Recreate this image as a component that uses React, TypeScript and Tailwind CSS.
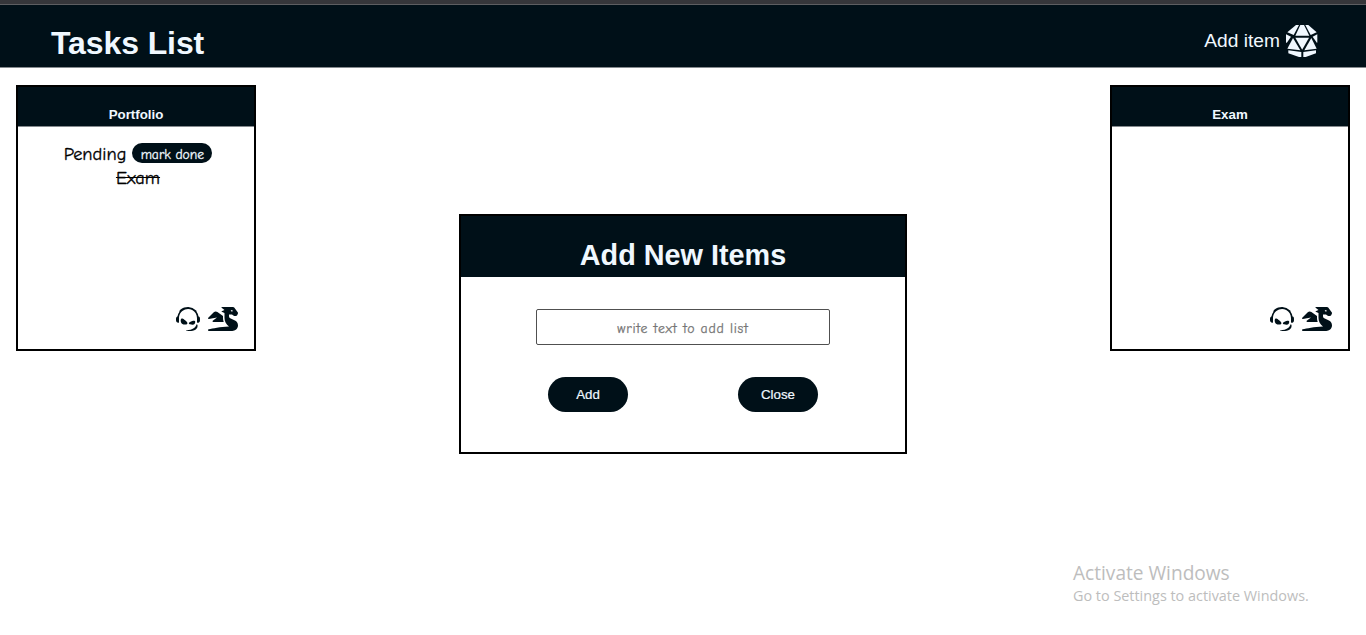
import { FaDragon, FaTeamspeak } from 'react-icons/fa';

type Item = { text: string; done: boolean };

function DiceIcon() {
  return (
    <svg viewBox="18 15 96 96" className="h-8 w-8" fill="currentColor" aria-hidden="true">
      <path d="M61 15h11l16 32H46z" />
      <path d="M48 15h9L41 45 22 37z" />
      <path d="M85 15h-9l16 30 18-8z" />
      <path d="M18 43l15 7-13 19-2-2z" />
      <path d="M112 43l-14 7 13 19 1-2z" />
      <path d="M46 53h41L66.500 89z" />
      <path d="M39 54l22 37-39-5z" />
      <path d="M94 54L73 91l37-5z" />
      <path d="M25 91l39 5v15h-7l-32-11z" />
      <path d="M108 91l-38 5v15h7l31-11z" />
    </svg>
  );
}

function TaskCard({ title, items }: { title: string; items: Item[] }) {
  return (
    <section className="flex h-[266px] w-[240px] flex-col border-2 border-black bg-white">
      <h2 className="h-[40px] border-b border-[#858a8e] bg-[#001018] pt-[20px] text-center font-['Liberation_Sans',sans-serif] text-[13.3px] leading-[16px] font-bold text-[#f0f8ff]">
        {title}
      </h2>
      <ul className="flex-1 pt-[15px] pl-1 text-center font-['Comic_Neue',cursive] text-[18.400px] leading-6 text-black [-webkit-text-stroke:0.3px]">
        {items.map((item) =>
          item.done ? (
            <li key={item.text} className="line-through">{item.text}</li>
          ) : (
            <li key={item.text} className="flex h-6 items-start justify-center gap-[6px]">
              <span>{item.text}</span>
              <button className="mt-px h-5 w-20 rounded-full bg-[#001018] pt-[3px] text-[13.6px] leading-[17px] whitespace-nowrap text-[#f0f8ff]">
                mark done
              </button>
            </li>
          ),
        )}
      </ul>
      <div className="flex items-center justify-end gap-2 pr-4 pb-[18px] text-[#001018]">
        <FaTeamspeak className="h-6 w-6" />
        <FaDragon className="h-6 w-[30px]" />
      </div>
    </section>
  );
}

function AddDialog() {
  return (
    <section className="mt-[129px] h-[240px] w-[448px] border-2 border-black bg-white font-['Liberation_Sans',sans-serif]">
      <h2 className="h-[61px] bg-[#001018] pt-[21px] text-center text-[28.8px] leading-[36px] font-bold text-[#f0f8ff]">
        Add New Items
      </h2>
      <div className="flex flex-col items-center gap-8 pt-8">
        <input
          placeholder="write text to add list"
          className="h-9 w-[294px] rounded-[2px] border border-[#505050] pt-[3px] text-center font-['Comic_Neue',cursive] text-[13.8px] tracking-[0.75px] [-webkit-text-stroke:0.25px] placeholder:text-[#757575]"
        />
        <div className="flex w-[270px] justify-between text-[13.3px] text-[#f0f8ff] [-webkit-text-stroke:0.2px]">
          <button className="h-[35px] w-20 rounded-full bg-[#001018]">Add</button>
          <button className="h-[35px] w-20 rounded-full bg-[#001018]">Close</button>
        </div>
      </div>
    </section>
  );
}

export default function App() {
  return (
    <div className="relative flex h-[635px] flex-col overflow-hidden bg-white">
      <div className="h-[5px] border-b border-[#5d5e61] bg-[#35363a]" />
      <header className="flex h-[63px] items-center justify-between border-b border-[#858a8e] bg-[#001018] pr-12 pl-[51px] font-['Liberation_Sans',sans-serif] text-[#f0f8ff]">
        <h1 className="pt-[14px] text-[32px] leading-[36px] font-bold tracking-[-0.1px]">Tasks List</h1>
        <button className="flex items-center gap-[6px] pt-[9px] text-[19.2px]">
          <span className="pt-[2px]">Add item</span>
          <DiceIcon />
        </button>
      </header>
      <main className="flex items-start justify-between px-4 pt-[17px]">
        <TaskCard
          title="Portfolio"
          items={[
            { text: 'Pending', done: false },
            { text: 'Exam', done: true },
          ]}
        />
        <AddDialog />
        <TaskCard title="Exam" items={[]} />
      </main>
      <aside className="absolute top-[560px] left-[1073px] font-['Open_Sans',sans-serif] whitespace-nowrap text-[#bdbdbd]">
        <p className="text-[19.1px] leading-[26px]">Activate Windows</p>
        <p className="text-[14.4px] leading-[20px]">Go to Settings to activate Windows.</p>
      </aside>
    </div>
  );
}
